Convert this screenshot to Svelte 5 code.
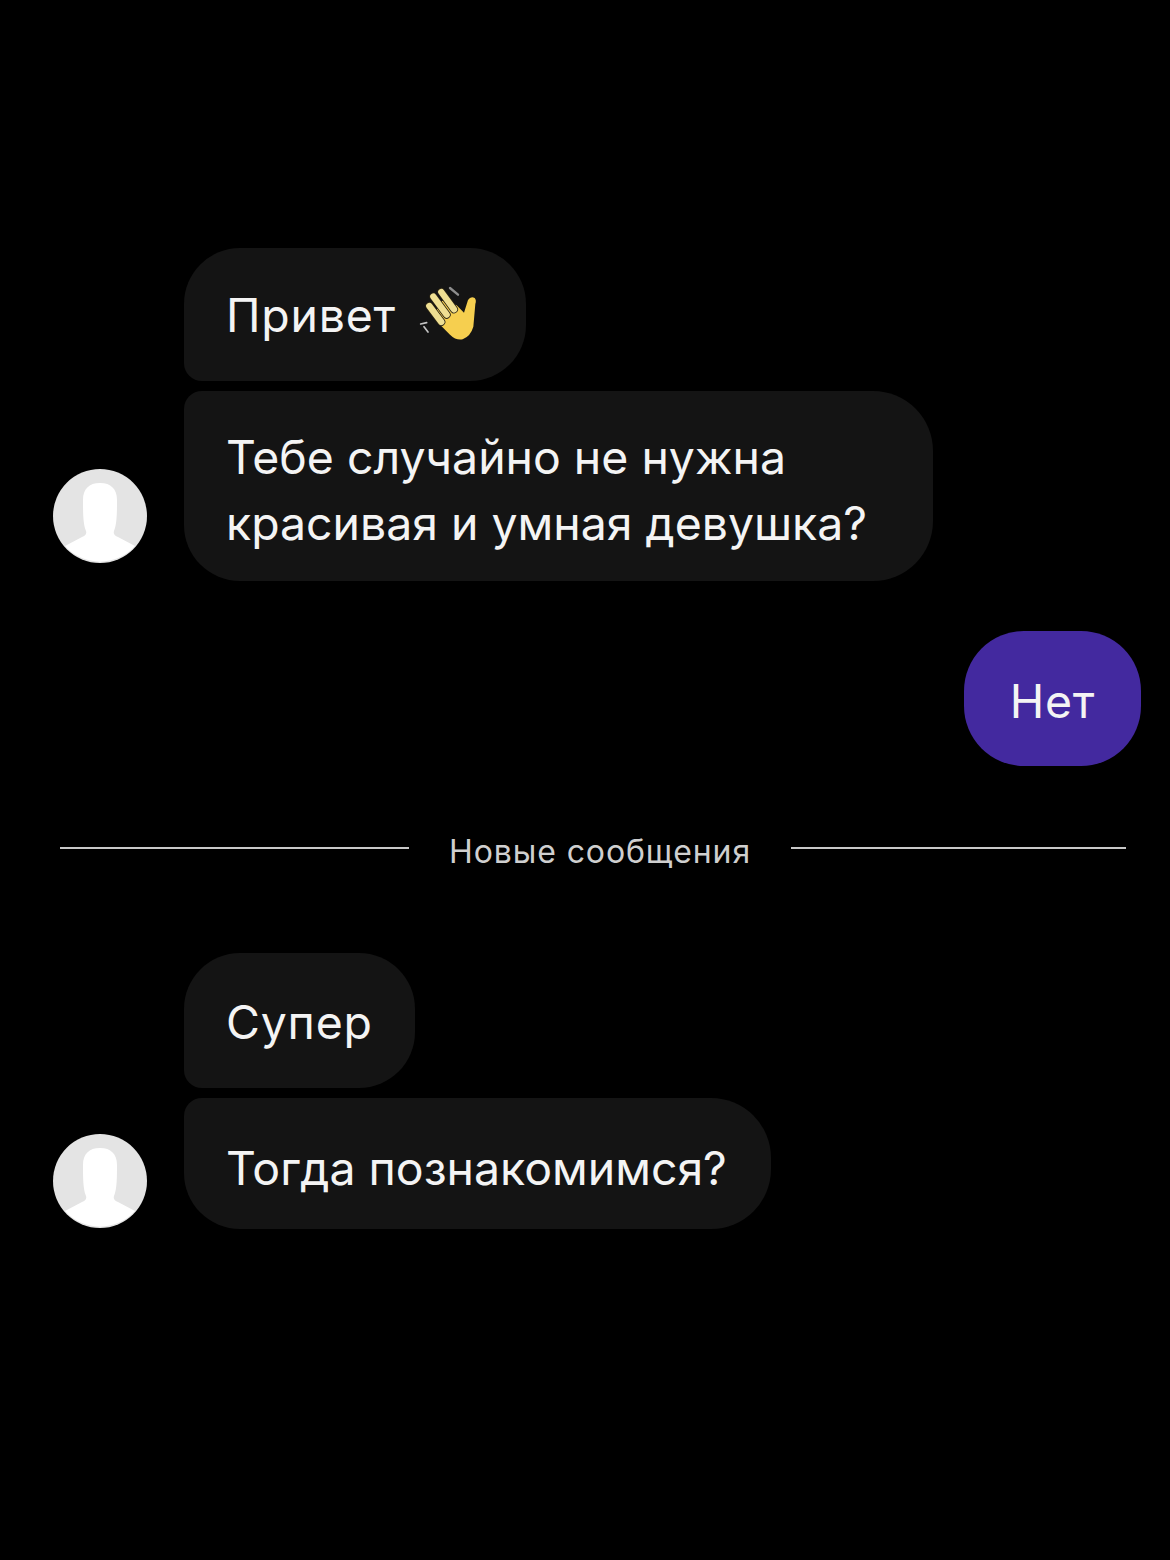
<script>
  const fingers = [
    "M46 78 L82 126",
    "M58 50 L98 104",
    "M82 36 L120 88",
  ];
  const avatarBody =
    "M47 14c-11 0-17 6-17 17 0 12 0 24 3 31 1 3-1 5-4 6L12 77A47 47 0 0 0 82 77L65 68c-3-1-5-3-4-6 3-7 3-19 3-31 0-11-6-17-17-17z";
</script>

<main class="chat">
  <section class="group first">
    <div class="avatar-col">
      <svg class="avatar" viewBox="0 0 94 94" aria-hidden="true">
        <circle cx="47" cy="47" r="47" fill="#e4e4e4" />
        <path d={avatarBody} fill="#fff" />
      </svg>
    </div>
    <div class="bubbles">
      <div class="bubble top hello">
        <span class="short">Привет</span>
        <svg class="emoji" viewBox="0 0 210 210" aria-hidden="true">
          <path d="M58 108 L84 62 L128 76 L150 98 L162 60 Q170 48 182 54 Q188 60 184 72 L178 140 Q170 168 146 178 Q126 182 108 164 L76 132 Z" fill="#f6cf4f" />
          {#each fingers as d}
            <path {d} stroke="#2a2414" stroke-width="24" stroke-linecap="round" fill="none" />
          {/each}
          {#each fingers as d}
            <path {d} stroke="#efdf92" stroke-width="19" stroke-linecap="round" fill="none" />
          {/each}
          <path d="M108 24 L132 44" stroke="#8d8d8d" stroke-width="7" stroke-linecap="round" />
          <path d="M20 132 L38 128 M30 140 L42 156" stroke="#c4c4c4" stroke-width="5" stroke-linecap="round" />
        </svg>
      </div>
      <div class="bubble bottom offer">
        Тебе случайно не нужна<br />красивая и умная девушка?
      </div>
    </div>
  </section>

  <section class="mine">
    <div class="bubble out"><span class="short">Нет</span></div>
  </section>

  <div class="divider">
    <span class="rule left"></span>
    <span class="label">Новые сообщения</span>
    <span class="rule right"></span>
  </div>

  <section class="group second">
    <div class="avatar-col">
      <svg class="avatar" viewBox="0 0 94 94" aria-hidden="true">
        <circle cx="47" cy="47" r="47" fill="#e4e4e4" />
        <path d={avatarBody} fill="#fff" />
      </svg>
    </div>
    <div class="bubbles">
      <div class="bubble top super"><span class="short">Супер</span></div>
      <div class="bubble bottom last">Тогда познакомимся?</div>
    </div>
  </section>
</main>

<style>
  :global(body) {
    margin: 0;
    background: #000;
  }

  .chat {
    box-sizing: border-box;
    width: 1170px;
    height: 1560px;
    padding-top: 248px;
    background: #000;
    color: #f4f4f4;
    font-family: Inter, Roboto, "Liberation Sans", sans-serif;
    font-size: 46.4px;
  }

  .short {
    letter-spacing: 0.8px;
  }

  .group {
    display: flex;
    gap: 37px;
    padding-left: 53px;
  }

  .avatar-col {
    display: flex;
    align-items: flex-end;
  }

  .first .avatar-col {
    padding-bottom: 18px;
  }

  .second .avatar-col {
    padding-bottom: 1px;
  }

  .avatar {
    display: block;
    width: 94px;
    height: 94px;
  }

  .bubbles {
    display: flex;
    flex-direction: column;
    align-items: flex-start;
    gap: 10px;
  }

  .bubble {
    box-sizing: border-box;
    padding: 33px 42px;
    background: #141414;
    line-height: 66px;
  }

  .top {
    border-radius: 56px 56px 56px 18px;
  }

  .bottom {
    border-radius: 18px 60px 60px 56px;
  }

  .hello {
    display: flex;
    align-items: center;
    gap: 18px;
    width: 342px;
    height: 133px;
    padding-bottom: 33px;
  }

  .emoji {
    flex: none;
    width: 70px;
    height: 70px;
  }

  .offer {
    width: 749px;
    height: 190px;
  }

  .super {
    width: 231px;
    height: 135px;
    padding-top: 36px;
  }

  .last {
    width: 587px;
    height: 131px;
    padding-top: 37px;
  }

  .mine {
    display: flex;
    justify-content: flex-end;
    padding: 50px 29px 0 0;
  }

  .out {
    width: 177px;
    height: 135px;
    padding: 37px 0 0;
    text-align: center;
    border-radius: 60px;
    background: #43299f;
  }

  .divider {
    display: flex;
    align-items: center;
    gap: 40px;
    height: 26px;
    margin: 69px 44px 92px 60px;
  }

  .rule {
    height: 2px;
    background: #c8c8c8;
  }

  .left {
    width: 349px;
  }

  .right {
    width: 335px;
  }

  .label {
    width: 302px;
    margin-top: 6px;
    color: #cfcfcf;
    font-size: 32px;
    letter-spacing: 0.9px;
    white-space: nowrap;
  }
</style>
